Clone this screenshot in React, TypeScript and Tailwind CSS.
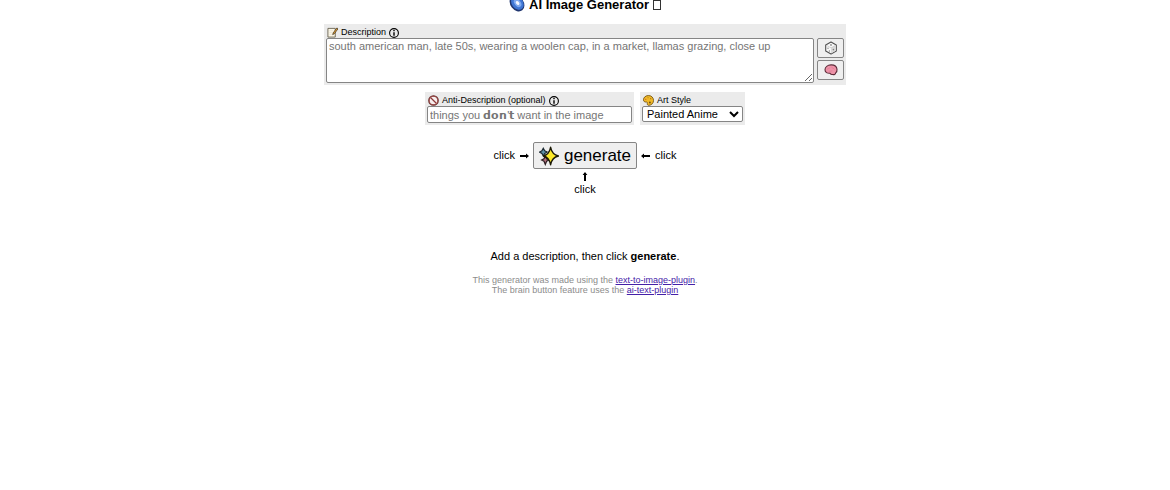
import { useState } from "react";
import type { ReactNode } from "react";
import clsx from "clsx";

function GalaxyIcon() {
  return (
    <svg viewBox="0 0 16 16" className="size-4 shrink-0" aria-hidden="true">
      <ellipse cx="8" cy="7.5" rx="6.6" ry="8.6" transform="rotate(-38 8 7.5)" fill="#20366f" />
      <ellipse cx="8.4" cy="7" rx="5.6" ry="7.4" transform="rotate(-38 8.4 7)" fill="#3f76d4" />
      <ellipse cx="8.6" cy="7" rx="3" ry="4.6" transform="rotate(-40 8.6 7)" fill="#7fa9ee" />
      <ellipse cx="8.6" cy="7" rx="1.5" ry="2.2" transform="rotate(-40 8.6 7)" fill="#f3f6ff" />
    </svg>
  );
}

function MemoIcon() {
  return (
    <svg viewBox="0 0 12 12" className="size-[11px] shrink-0" aria-hidden="true">
      <path d="M1 1.5h8V11H1z" fill="#fbf6e6" stroke="#5b5442" strokeWidth="0.9" />
      <path d="M2.5 4h4M2.5 6h4M2.5 8h3" stroke="#dcd7c8" strokeWidth="0.5" />
      <path d="M10.8 1 6.8 6.4 6.2 8.3l1.7-.9L12 2z" fill="#f0a730" stroke="#3e3220" strokeWidth="0.8" />
    </svg>
  );
}

function InfoIcon() {
  return (
    <svg viewBox="0 0 10 10" className="size-[10px] shrink-0" role="img" aria-label="info">
      <circle cx="5" cy="5" r="4.4" fill="none" stroke="#000" strokeWidth="1.1" />
      <path d="M5 4.2v3.6" stroke="#000" strokeWidth="1.4" />
      <circle cx="5" cy="2.6" r="0.8" fill="#000" />
    </svg>
  );
}

function ProhibitedIcon() {
  return (
    <svg viewBox="0 0 12 12" className="size-[11px] shrink-0" aria-hidden="true">
      <circle cx="6" cy="6" r="5" fill="#f7eeee" stroke="#5a2a2a" strokeWidth="1.6" />
      <path d="m2.7 2.7 6.6 6.6" stroke="#8d3a3a" strokeWidth="1.3" />
      <circle cx="6" cy="6" r="4.8" fill="none" stroke="#c75a56" strokeWidth="0.7" />
    </svg>
  );
}

function PaletteIcon() {
  return (
    <svg viewBox="0 0 12 12" className="size-[11px] shrink-0" aria-hidden="true">
      <path
        d="M6 .6C2.8.6.5 2.7.5 5.2c0 2 1.5 2.6 3 2.5 1.3-.1 1.400.6 1.200 1.600-.2 1.200.5 2.100 1.700 2 2.900-.2 5.100-2.400 5.100-5.300C11.500 2.900 9.200.6 6 .6Z"
        fill="#f0b928"
        stroke="#6b4a0c"
        strokeWidth="0.9"
      />
      <circle cx="3" cy="4.7" r="0.7" fill="#c8592a" />
      <circle cx="5.5" cy="2.9" r="0.7" fill="#c08a16" />
      <circle cx="8.4" cy="4" r="0.7" fill="#a87816" />
      <circle cx="7.5" cy="8.2" r="1" fill="#6b4a10" />
    </svg>
  );
}

function DieIcon() {
  return (
    <svg viewBox="0 0 14 14" className="size-[14px]" aria-hidden="true">
      <path
        d="m7 1 5.300 2.900v6.200L7 13l-5.300-2.900V3.900z"
        fill="#f8f8f8"
        stroke="#505050"
        strokeWidth="1.1"
        strokeLinejoin="round"
      />
      <path d="M11.800 4.300 7 6.900v5.500l4.800-2.600z" fill="#dadada" />
      <path d="m2.200 4.200 4.800 2.700 4.800-2.700" fill="none" stroke="#bdbdbd" strokeWidth="0.6" />
      <circle cx="7" cy="3.900" r="0.900" fill="#8a8a8a" />
      <circle cx="4" cy="7.200" r="0.700" fill="#8a8a8a" />
      <circle cx="5.400" cy="10" r="0.700" fill="#8a8a8a" />
      <circle cx="9.400" cy="8.600" r="0.800" fill="#808080" />
    </svg>
  );
}

function BrainIcon() {
  return (
    <svg viewBox="0 0 14 14" className="size-[14px]" aria-hidden="true">
      <path
        d="M1 6.800C1 4 3.600 2 7 1.900c3.300-.1 5.700 1.600 6 4.300.2 1.600-.3 2.900-1.300 3.700-.3 1.500-1.700 2-3.200 1.600-1.200.2-2-.4-2.500-1.200C3.300 10.500 1 9.400 1 6.800Z"
        fill="#ee93a8"
        stroke="#5d2b38"
        strokeWidth="1.1"
      />
      <path
        d="M3 6.500c1-1.500 2.500-.5 3-2M7.500 3.800c0 1.700 2.500 1 3 2.700M4.800 8.300c1.400.3 2-.6 3.500-.4"
        fill="none"
        stroke="#d9768f"
        strokeWidth="0.6"
      />
    </svg>
  );
}

function SparklesIcon() {
  return (
    <svg viewBox="0 0 20 20" className="size-5 shrink-0" aria-hidden="true">
      <path
        d="m4.300 2.200 1.400 2.500 2.500 1.400-2.500 1.400-1.400 2.500-1.400-2.500L.6 6.100l2.300-1.400z"
        fill="#5f93ab"
        stroke="#1d2b33"
        strokeWidth="1.2"
      />
      <path
        d="m6.300 9.800 1.300 2.900 2.500 1.300-2.500 1.300-1.300 3.200L5 15.300 2.600 14 5 12.700z"
        fill="#b5727e"
        stroke="#2b1c20"
        strokeWidth="1.2"
      />
      <path
        d="M11.600 1.200c.9 5 2.800 7.800 7.900 8.800-5.100 1-7 3.800-7.900 8.800-.9-5-2.400-7.800-7.200-8.800 4.800-1 6.300-3.800 7.200-8.800Z"
        fill="#fdea2a"
        stroke="#1c1a05"
        strokeWidth="1.3"
        strokeLinejoin="round"
      />
    </svg>
  );
}

function Arrow({ className }: { className?: string }) {
  return (
    <svg viewBox="0 0 10 8" className={clsx("h-2 w-[10px] shrink-0", className)} aria-hidden="true">
      <path d="M1 3h6V1.600L10 4 7 6.400V5H1z" fill="#000" />
    </svg>
  );
}

function Panel({ className, children }: { className?: string; children: ReactNode }) {
  return <div className={clsx("bg-[#ebebeb] px-[2px] pt-[3px] pb-[2px]", className)}>{children}</div>;
}

const STYLES = ["Painted Anime", "Casual Photo", "Cinematic", "Digital Painting", "Concept Art", "No Style"];

const labelRow = "flex h-[11px] items-center gap-[3px] px-px text-[9px] leading-[11px]";

const iconButton =
  "flex h-5 w-[27px] items-center justify-center rounded-[2px] border border-[#858585] bg-[#efefef]";

export default function App() {
  const [description, setDescription] = useState("");
  const [antiDescription, setAntiDescription] = useState("");
  const [artStyle, setArtStyle] = useState(STYLES[0]);

  return (
    <main className="flex flex-col items-center bg-white font-['Liberation_Sans',Arial,sans-serif] text-[11px] text-black">
      {/* the heading is scrolled partly out of view */}
      <h1 className="-mt-1 flex h-7 items-start gap-1 text-[13px] leading-[18px] font-bold">
        <GalaxyIcon />
        <span>AI Image Generator</span>
        <span className="mt-1 h-[10px] w-2 border border-[#333]" />
      </h1>

      <Panel className="w-full max-w-[522px]">
        <div className={labelRow}>
          <MemoIcon />
          <label htmlFor="description">Description</label>
          <InfoIcon />
        </div>
        <div className="flex gap-[3px]">
          <textarea
            id="description"
            value={description}
            onChange={(e) => setDescription(e.target.value)}
            placeholder="south american man, late 50s, wearing a woolen cap, in a market, llamas grazing, close up"
            className="h-[45px] min-w-0 flex-1 resize rounded-[2px] border border-[#858585] bg-white px-[2px] py-px leading-3 placeholder:text-[#757575]"
          />
          <div className="flex flex-col gap-[2px]">
            <button type="button" aria-label="Random description" className={iconButton}>
              <DieIcon />
            </button>
            <button type="button" aria-label="Improve with AI" className={iconButton}>
              <BrainIcon />
            </button>
          </div>
        </div>
      </Panel>

      <div className="mt-[7px] flex gap-[6px]">
        <Panel className="w-[209px]">
          <div className={labelRow}>
            <ProhibitedIcon />
            <label htmlFor="anti-description">Anti-Description (optional)</label>
            <InfoIcon />
          </div>
          <input
            id="anti-description"
            type="text"
            value={antiDescription}
            onChange={(e) => setAntiDescription(e.target.value)}
            placeholder="things you 𝗱𝗼𝗻'𝘁 want in the image"
            className="block h-[17px] w-full rounded-[2px] border border-[#858585] bg-white px-[2px] leading-3 placeholder:text-[#757575]"
          />
        </Panel>
        <Panel className="w-[105px]">
          <div className={labelRow}>
            <PaletteIcon />
            <label htmlFor="art-style">Art Style</label>
          </div>
          <select
            id="art-style"
            value={artStyle}
            onChange={(e) => setArtStyle(e.target.value)}
            className="block h-4 w-full rounded-[2px] border border-[#858585] bg-white leading-[14px]"
          >
            {STYLES.map((s) => (
              <option key={s}>{s}</option>
            ))}
          </select>
        </Panel>
      </div>

      <div className="mt-[17px] flex items-center gap-1">
        <span>click</span>
        <Arrow />
        <button
          type="button"
          className="flex h-[27px] items-center gap-[5px] rounded-[2px] border border-[#858585] bg-[#efefef] px-[5px] text-[17px]"
        >
          <SparklesIcon />
          generate
        </button>
        <Arrow className="rotate-180" />
        <span>click</span>
      </div>
      <Arrow className="mt-1 -rotate-90" />
      <span className="leading-4">click</span>

      <p className="mt-[51px] leading-4">
        Add a description, then click <b>generate</b>.
      </p>
      <p className="mt-[11px] text-center text-[9px] leading-[10px] text-[#8c8c8c]">
        This generator was made using the{" "}
        <a href="#text-to-image-plugin" className="text-[#4520a8] underline">
          text-to-image-plugin
        </a>
        .<br />
        The brain button feature uses the{" "}
        <a href="#ai-text-plugin" className="text-[#4520a8] underline">
          ai-text-plugin
        </a>
      </p>
    </main>
  );
}
